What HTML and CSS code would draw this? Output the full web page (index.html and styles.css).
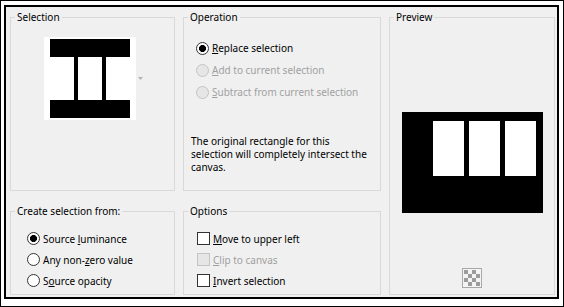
FILE: index.html
```html
<!DOCTYPE html>
<html lang="en">
<head>
  <meta charset="UTF-8">
  <title>Selection From Mask</title>
  <link rel="stylesheet" href="styles.css">
</head>
<body>
  <div class="frame">
    <div class="dialog">

      <fieldset class="group sel">
        <legend>Selection</legend>
        <div class="thumb-row">
          <svg class="thumb" width="92" height="83" viewBox="0 0 92 83">
            <rect width="92" height="83" fill="#fff"/>
            <rect x="6" y="2" width="80" height="18" fill="#000"/>
            <rect x="6" y="63" width="80" height="18" fill="#000"/>
            <rect x="30" y="20" width="4" height="43" fill="#000"/>
            <rect x="58" y="20" width="4" height="43" fill="#000"/>
          </svg>
          <svg class="drop" width="5" height="3" viewBox="0 0 5 3"><path d="M0 0h5L2.5 3z" fill="#b4b4b4"/></svg>
        </div>
      </fieldset>

      <fieldset class="group op">
        <legend>Operation</legend>
        <div class="rows op-rows">
          <label class="row"><input type="radio" name="op" checked><span><u>R</u>eplace selection</span></label>
          <label class="row off"><input type="radio" name="op" disabled><span><u>A</u>dd to current selection</span></label>
          <label class="row off"><input type="radio" name="op" disabled><span><u>S</u>ubtract from current selection</span></label>
        </div>
        <p class="note">The original rectangle for this selection will completely intersect the canvas.</p>
      </fieldset>

      <fieldset class="group preview">
        <legend>Preview</legend>
        <div class="preview-body">
          <svg width="141" height="101" viewBox="0 0 141 101">
            <rect width="141" height="101" fill="#000"/>
            <rect x="31" y="9" width="31" height="55" fill="#fff"/>
            <rect x="67" y="9" width="31" height="55" fill="#fff"/>
            <rect x="103" y="9" width="31" height="55" fill="#fff"/>
          </svg>
          <svg class="checker" width="20" height="20" viewBox="0 0 20 20">
            <rect x="0.5" y="0.5" width="19" height="19" fill="#f4f4f4" stroke="#a8a8a8"/>
            <rect x="2" y="2" width="4" height="4" fill="#9c9c9c"/>
            <rect x="10" y="2" width="4" height="4" fill="#9c9c9c"/>
            <rect x="6" y="6" width="4" height="4" fill="#9c9c9c"/>
            <rect x="14" y="6" width="4" height="4" fill="#9c9c9c"/>
            <rect x="2" y="10" width="4" height="4" fill="#9c9c9c"/>
            <rect x="10" y="10" width="4" height="4" fill="#9c9c9c"/>
            <rect x="6" y="14" width="4" height="4" fill="#9c9c9c"/>
            <rect x="14" y="14" width="4" height="4" fill="#9c9c9c"/>
          </svg>
        </div>
      </fieldset>

      <fieldset class="group create">
        <legend>Create selection from:</legend>
        <div class="rows low-rows create-rows">
          <label class="row"><input type="radio" name="src" checked><span>Source <u>l</u>uminance</span></label>
          <label class="row"><input type="radio" name="src"><span>Any non-<u>z</u>ero value</span></label>
          <label class="row"><input type="radio" name="src"><span>S<u>o</u>urce opacity</span></label>
        </div>
      </fieldset>

      <fieldset class="group opts">
        <legend>Options</legend>
        <div class="rows low-rows opt-rows">
          <label class="row"><input type="checkbox"><span><u>M</u>ove to upper left</span></label>
          <label class="row off"><input type="checkbox" disabled><span><u>C</u>lip to canvas</span></label>
          <label class="row"><input type="checkbox"><span><u>I</u>nvert selection</span></label>
        </div>
      </fieldset>

    </div>
  </div>
</body>
</html>
```

FILE: styles.css
```css
* { box-sizing: border-box; }
body { margin: 0; background: #fff; font-family: "Noto Sans", sans-serif; font-size: 10px; color: #000; }

.frame { width: 564px; height: 307px; border: 1px solid #000; padding: 4px 4px 7px 3px; background: #fff; }
.dialog { height: 100%; border: 2px solid #000; background: #f0f0f0; display: grid; grid-template-columns: 165px 198px 166px; grid-template-rows: 181px 91px; column-gap: 8px; row-gap: 13px; padding: 3px 2px 2px 4px; }

.group { margin: 0; padding: 0; min-width: 0; border: 1px solid #d9d9d9; }
.group legend { margin-left: 4px; padding: 0 2px; line-height: 14px; }

.sel { grid-column: 1; grid-row: 1; }
.op { grid-column: 2; grid-row: 1; }
.preview { grid-column: 3; grid-row: 1 / span 2; }
.create { grid-column: 1; grid-row: 2; }
.opts { grid-column: 2; grid-row: 2; }

.thumb-row { display: flex; align-items: center; gap: 2px; padding: 13px 0 0 33px; }
.thumb, .drop { display: block; }

.rows { display: flex; flex-direction: column; }
.row { display: flex; align-items: center; height: 22px; white-space: nowrap; }
.row.off { color: #a0a0a0; }
.op-rows { padding: 13px 0 0 12px; }
.low-rows { padding-top: 10px; }
.low-rows .row { height: 21px; }
.create-rows { padding-left: 16px; }
.opt-rows { padding-left: 13px; }

.row input { appearance: none; -webkit-appearance: none; width: 13px; height: 13px; margin: 0 3px 0 0; border: 1px solid #333; background: #fff; flex: none; }
.row input[type="radio"] { border-radius: 50%; }
.row input[type="radio"]:checked { background: radial-gradient(circle, #000 0 3.2px, #fff 3.8px); }
.row input:disabled { border-color: #c4c4c4; background: #e6e6e6; }
.row u { text-decoration: underline; text-underline-offset: 1px; }

.note { margin: 32px 0 0 7px; line-height: 13px; width: 179px; }

.preview-body { display: flex; flex-direction: column; align-items: center; padding-top: 88px; }
.preview-body svg { display: block; }
.checker { margin-top: 55px; }
```
